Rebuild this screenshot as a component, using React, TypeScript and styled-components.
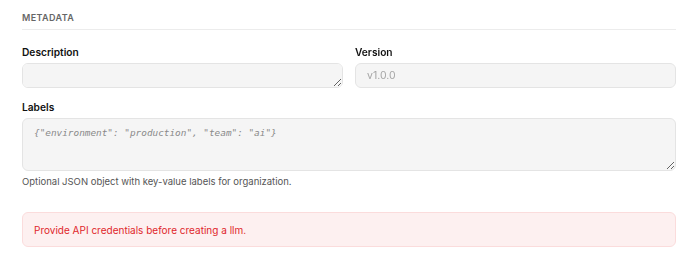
import * as React from 'react';
import styled, { createGlobalStyle } from 'styled-components';

const GlobalStyle = createGlobalStyle`
  body {
    margin: 0;
    background: #ffffff;
    font-family: Inter, "Noto Sans", sans-serif;
    color: #111111;
  }
`;

const Page = styled.div`
  padding: 12px 14px 0 22px;
  width: 654px;
`;

const Section = styled.section`
  display: flex;
  flex-direction: column;
`;

const SectionTitle = styled.h3`
  margin: 0;
  padding-bottom: 5px;
  border-bottom: 1px solid #ececec;
  font-size: 9px;
  font-weight: 600;
  letter-spacing: 0.4px;
  color: #666666;
  line-height: 12px;
`;

const Row = styled.div`
  display: grid;
  grid-template-columns: 1fr 1fr;
  gap: 12px;
  margin-top: 16px;
`;

const Field = styled.div<{ $top?: number }>`
  display: flex;
  flex-direction: column;
  margin-top: ${p => p.$top || 0}px;
`;

const Label = styled.label`
  font-size: 10.2px;
  font-weight: 600;
  line-height: 12px;
  color: #111111;
  margin-bottom: 5px;
`;

const boxStyles = `
  box-sizing: border-box;
  width: 100%;
  background: #f5f5f5;
  border: 1px solid #e4e4e4;
  border-radius: 6px;
  outline: none;
  margin: 0;
`;

const TextArea = styled.textarea<{ $height: number; $mono?: boolean }>`
  ${boxStyles}
  height: ${p => p.$height}px;
  padding: 8px 11px;
  font-family: ${p => (p.$mono ? '"DejaVu Sans Mono", monospace' : 'Inter, sans-serif')};
  font-size: ${p => (p.$mono ? '9.4px' : '10px')};
  display: block;

  &::placeholder {
    color: #8a8a8a;
    font-style: italic;
  }
`;

const TextInput = styled.input`
  ${boxStyles}
  height: 25px;
  padding: 0 11px;
  font-family: Inter, sans-serif;
  font-size: 10.5px;

  &::placeholder {
    color: #a6a6a6;
  }
`;

const Help = styled.p`
  margin: 5px 0 0;
  font-size: 9.5px;
  line-height: 12px;
  color: #555555;
`;

const Alert = styled.div`
  box-sizing: border-box;
  margin-top: 24px;
  height: 35px;
  display: flex;
  align-items: center;
  padding: 0 11px;
  background: #fdf0f0;
  border: 1px solid #fbdcdc;
  border-radius: 6px;
  color: #e0262b;
  font-size: 10px;
`;

export default function App() {
  return (
    <>
      <GlobalStyle />
      <Page>
        <Section>
          <SectionTitle>METADATA</SectionTitle>
          <Row>
            <Field>
              <Label>Description</Label>
              <TextArea $height={25} />
            </Field>
            <Field>
              <Label>Version</Label>
              <TextInput placeholder="v1.0.0" />
            </Field>
          </Row>
          <Field $top={13}>
            <Label>Labels</Label>
            <TextArea
              $height={53}
              $mono
              placeholder={'{"environment": "production", "team": "ai"}'}
            />
            <Help>Optional JSON object with key-value labels for organization.</Help>
          </Field>
          <Alert>Provide API credentials before creating a llm.</Alert>
        </Section>
      </Page>
    </>
  );
}
